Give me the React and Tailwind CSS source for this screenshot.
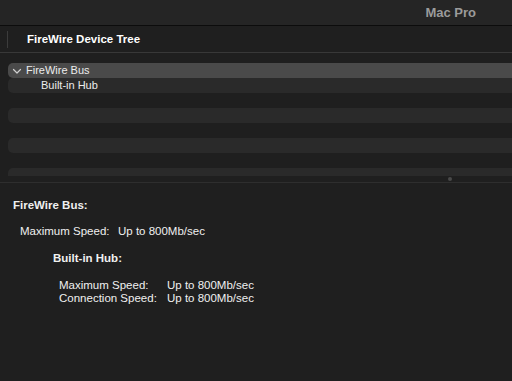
import React from 'react';

const font = { fontFamily: '"Liberation Sans", Arial, sans-serif' };

function TreeRow({ selected, striped, children }) {
  const bg = selected ? 'bg-[#4a4a4a]' : striped ? 'bg-[#2a2a2a]' : 'bg-transparent';
  return (
    <div className={`ml-2 h-[15px] shrink-0 rounded-l-[5px] flex items-center ${bg}`}>
      {children}
    </div>
  );
}

export default function App() {
  return (
    <div className="w-[512px] h-[381px] bg-[#1f1f1f] text-white flex flex-col overflow-hidden" style={font}>
      {/* Window title bar */}
      <div className="h-[26px] shrink-0 bg-[#252525] flex items-center justify-end pr-9 border-b border-[#0c0c0c]">
        <span className="text-[13px] font-bold text-[#9b9b9b]">Mac Pro</span>
      </div>

      {/* Column header */}
      <div className="h-[27px] shrink-0 flex items-center border-b border-[#383838]">
        <div className="ml-[7px] w-px h-[17px] bg-[#3c3c3c]"></div>
        <span className="ml-[19px] mt-[2px] text-[11.5px] font-bold">FireWire Device Tree</span>
      </div>

      {/* Device tree list */}
      <div className="h-[123px] shrink-0 pt-[10px] flex flex-col overflow-hidden">
        <TreeRow selected>
          <svg className="ml-[4px] mr-[4px]" width="10" height="10" viewBox="0 0 10 10">
            <path d="M1.5 3.5 L5 7 L8.5 3.5" fill="none" stroke="#cfcfcf" strokeWidth="1.2" strokeLinecap="round" strokeLinejoin="round" />
          </svg>
          <span className="text-[11px] text-[#ececec]">FireWire Bus</span>
        </TreeRow>
        <TreeRow striped>
          <span className="ml-[33px] text-[11px] text-[#ececec]">Built-in Hub</span>
        </TreeRow>
        <TreeRow />
        <TreeRow striped />
        <TreeRow />
        <TreeRow striped />
        <TreeRow />
        <TreeRow striped />
      </div>

      {/* Split handle */}
      <div className="h-[7px] shrink-0 flex items-center border-b border-[#2e2e2e]">
        <div className="ml-[448px] w-[4px] h-[4px] rounded-full bg-[#4a4a4a]"></div>
      </div>

      {/* Detail pane */}
      <div className="flex-1 text-[11.5px] leading-[16px] text-[#f0f0f0]">
        <div className="ml-[13px] mt-[14px] font-bold">FireWire Bus:</div>
        <div className="ml-[20px] mt-[10px] flex">
          <span className="w-[98px]">Maximum Speed:</span>
          <span>Up to 800Mb/sec</span>
        </div>
        <div className="ml-[53px] mt-[11px] font-bold">Built-in Hub:</div>
        <div className="ml-[59px] mt-[13px] flex flex-col leading-[13px]">
          <div className="flex">
            <span className="w-[108px]">Maximum Speed:</span>
            <span>Up to 800Mb/sec</span>
          </div>
          <div className="flex">
            <span className="w-[108px]">Connection Speed:</span>
            <span>Up to 800Mb/sec</span>
          </div>
        </div>
      </div>
    </div>
  );
}
